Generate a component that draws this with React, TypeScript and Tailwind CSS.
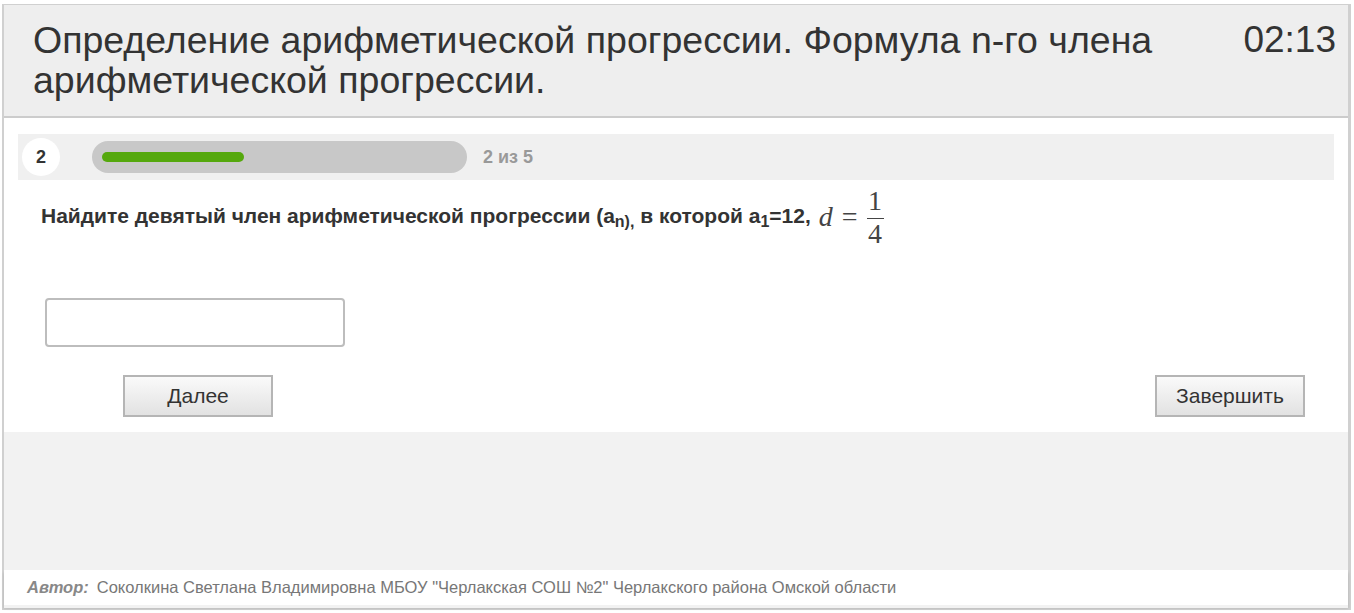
export default function App() {
  return (
    <div className="pt-[4px] pl-[2px] w-[1354px] h-[613px] bg-white" style={{ fontFamily: '"Liberation Sans", Arial, sans-serif' }}>
      <div className="w-[1349px] border-2 border-[#d0d0d0] border-t border-r-[3px] bg-white">
        <Header />
        <div className="bg-white pt-[16px] pb-[15px]">
          <Progress />
          <Question />
          <div className="pl-[41px] mt-[50px]">
            <input
              type="text"
              className="w-[300px] h-[49px] border-2 border-[#bdbdbd] rounded-[4px] bg-white outline-none"
            />
          </div>
          <div className="flex justify-between mt-[28px] pl-[119px] pr-[43px]">
            <Btn label="Далее" />
            <Btn label="Завершить" />
          </div>
        </div>
        <div className="h-[138px] bg-[#f2f2f2]" />
        <div className="h-[35px] bg-white flex items-center pl-[23px] text-[16.5px] text-[#777] shadow-[0_3px_3px_rgba(0,0,0,0.15)]">
          <span className="font-bold italic text-[#888] mr-[8px]">Автор:</span>
          <span>Соколкина Светлана Владимировна МБОУ "Черлакская СОШ №2" Черлакского района Омской области</span>
        </div>
        <div className="h-[3px] bg-[#f2f2f2]" />
      </div>
    </div>
  );
}

function Header() {
  return (
    <div className="bg-[#eeeeee] flex justify-between items-start pt-[15px] pb-[16px] pl-[29px] pr-[12px] border-b-2 border-[#cccccc] text-[#333]">
      <div className="text-[37.5px] leading-[40px] w-[1160px]">
        Определение арифметической прогрессии. Формула n-го члена арифметической прогрессии.
      </div>
      <div className="text-[37px] leading-[40px]">02:13</div>
    </div>
  );
}

function Progress() {
  return (
    <div className="mx-[14px] h-[46px] bg-[#f0f0f0] flex items-center pl-[4px]">
      <div className="w-[38px] h-[38px] rounded-full bg-white flex items-center justify-center text-[18px] font-bold text-[#333]">
        2
      </div>
      <div className="ml-[32px] w-[375px] h-[32px] rounded-full bg-[#c8c8c8] flex items-center pl-[10px]">
        <div className="w-[142px] h-[10px] rounded-full bg-[#55a80d]" />
      </div>
      <div className="ml-[16px] text-[18px] font-bold text-[#999]">2 из 5</div>
    </div>
  );
}

function Question() {
  return (
    <div className="flex items-center pl-[37px] mt-[6px] h-[62px] text-[21px] font-bold text-[#333]">
      <span className="-mt-[2px]">
        Найдите девятый член арифметической прогрессии (a<sub className="text-[16px]">n),</sub> в которой a<sub className="text-[16px]">1</sub>=12,
      </span>
      <span
        className="flex items-center ml-[8px] font-normal text-[#444] text-[28px]"
        style={{ fontFamily: '"Liberation Serif", "Times New Roman", serif' }}
      >
        <span className="italic">d</span>
        <span className="mx-[9px]">=</span>
        <span className="flex flex-col items-center leading-[28px]">
          <span className="mb-[3px]">1</span>
          <span className="w-[17px] h-[1px] bg-[#444]" />
          <span className="mt-[1px]">4</span>
        </span>
      </span>
    </div>
  );
}

function Btn({ label }: { label: string }) {
  return (
    <button
      type="button"
      className="w-[150px] h-[42px] border-2 border-[#b5b5b5] bg-gradient-to-b from-[#fafafa] to-[#e2e2e2] text-[21px] text-[#333]"
    >
      {label}
    </button>
  );
}
